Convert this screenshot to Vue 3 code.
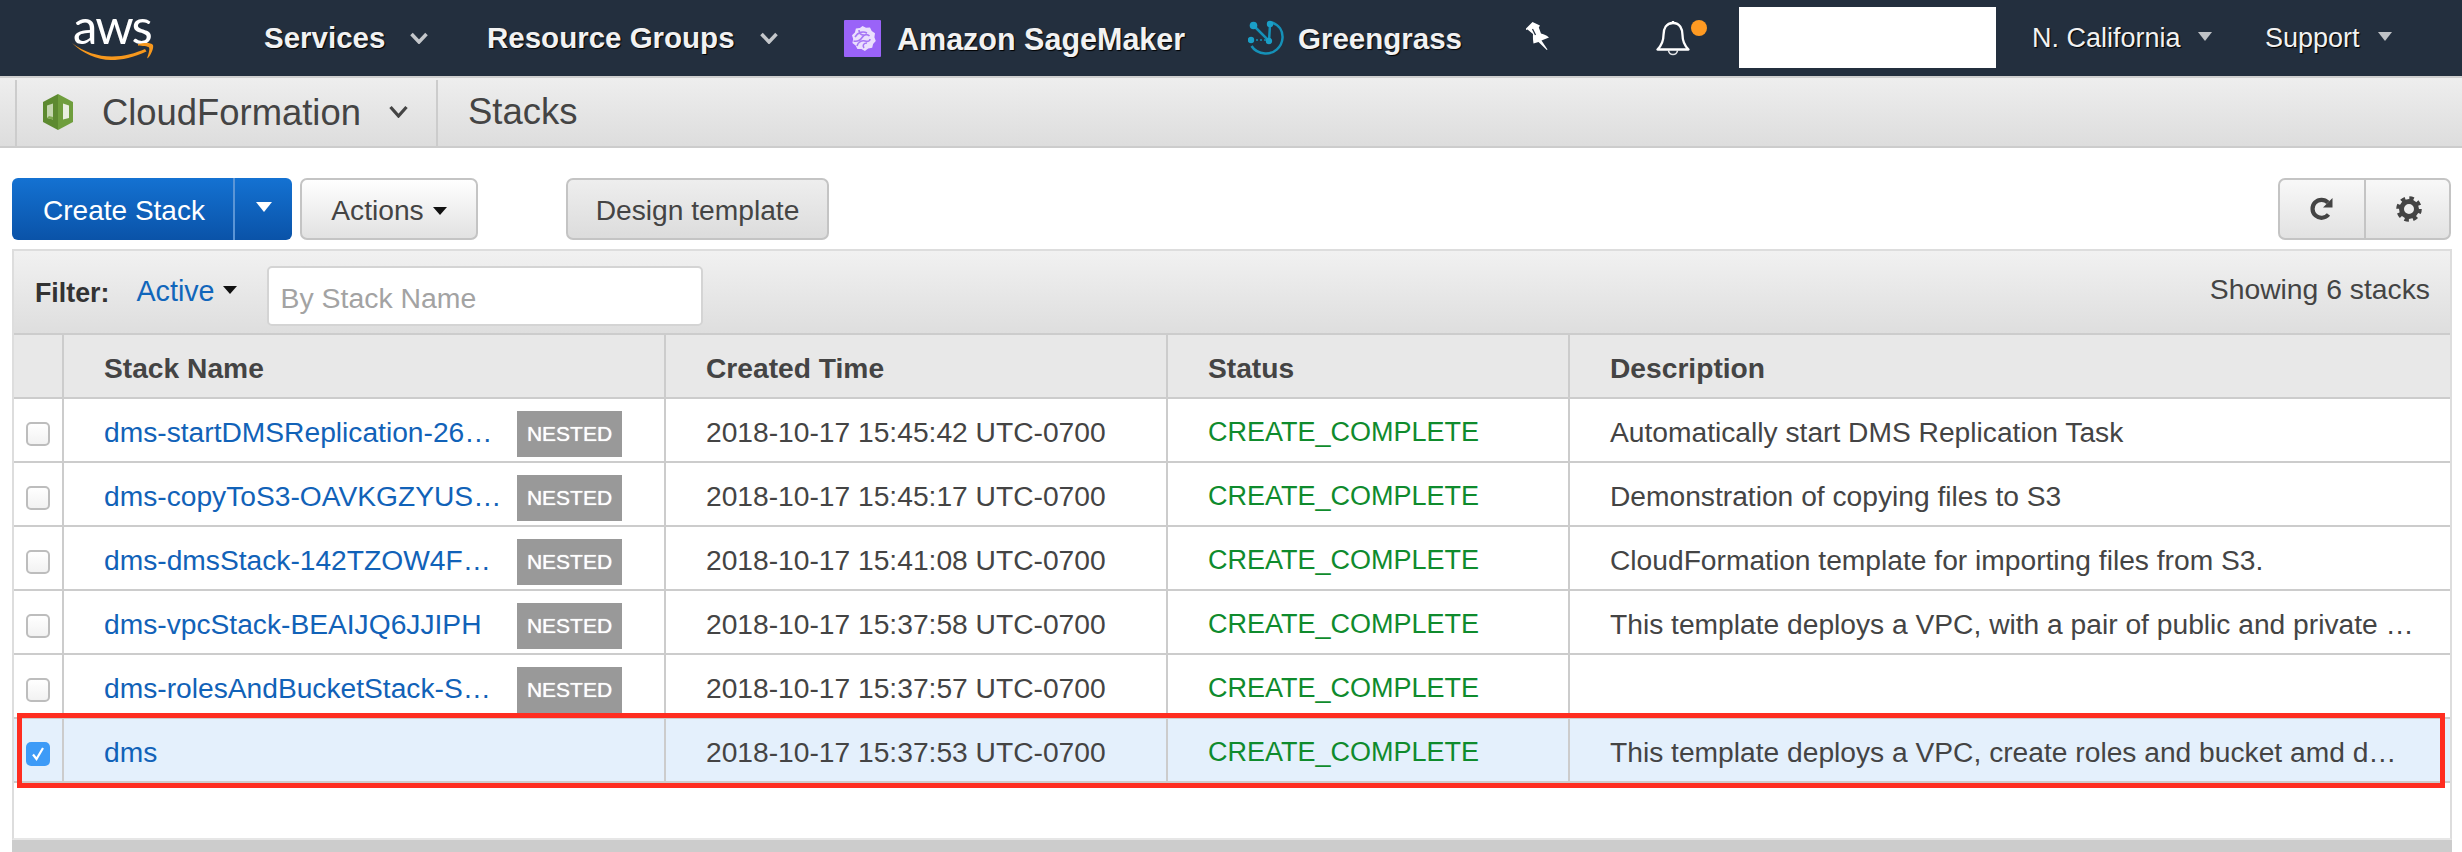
<script setup>
const rows = [
  { name: 'dms-startDMSReplication-26…', nested: true, time: '2018-10-17 15:45:42 UTC-0700', desc: 'Automatically start DMS Replication Task' },
  { name: 'dms-copyToS3-OAVKGZYUS…', nested: true, time: '2018-10-17 15:45:17 UTC-0700', desc: 'Demonstration of copying files to S3' },
  { name: 'dms-dmsStack-142TZOW4F…', nested: true, time: '2018-10-17 15:41:08 UTC-0700', desc: 'CloudFormation template for importing files from S3.' },
  { name: 'dms-vpcStack-BEAIJQ6JJIPH', nested: true, time: '2018-10-17 15:37:58 UTC-0700', desc: 'This template deploys a VPC, with a pair of public and private …' },
  { name: 'dms-rolesAndBucketStack-S…', nested: true, time: '2018-10-17 15:37:57 UTC-0700', desc: '' },
  { name: 'dms', nested: false, selected: true, time: '2018-10-17 15:37:53 UTC-0700', desc: 'This template deploys a VPC, create roles and bucket amd d…' }
]
</script>

<template>
  <div class="page">
    <header class="topbar">
      <div class="aws">
        <span class="aws-word">aws</span>
        <svg class="smile" viewBox="0 0 82 18" width="82" height="18">
          <path fill="#f7981d" d="M0 1C12 10 26 14.500 40 14.500C52 14.500 64 11 73 7L74.500 9.500C62 15.500 50 18 39 18C25 18 10 11 0 1Z" />
          <path fill="#f7981d" d="M66 2C71 .8 79 0 81 3C82 6 79 13 76 16C75.500 16.500 75 16 75.300 15.500C76.500 12 78 7 77 5.500C76 4 70 4 66 3.500Z" />
        </svg>
      </div>
      <span class="nav-b services">Services</span>
      <svg class="chev c1" viewBox="0 0 18 12" width="18" height="12"><path d="M1.500 2L9 10L16.500 2" fill="none" stroke="#c4c7cb" stroke-width="3.500" /></svg>
      <span class="nav-b groups">Resource Groups</span>
      <svg class="chev c2" viewBox="0 0 18 12" width="18" height="12"><path d="M1.500 2L9 10L16.500 2" fill="none" stroke="#c4c7cb" stroke-width="3.500" /></svg>
      <svg class="sm-icon" viewBox="0 0 37 37" width="37" height="37">
        <rect width="37" height="37" rx="1" fill="#9a63f8" />
        <path fill="#eadffd" d="M18.500 6l3.500 1.800 4-.3 1.700 3.500 3.300 2.300-.6 4 1.400 3.700-2.700 2.900-.9 3.900-4 .7-3.300 2.400-3.500-1.900-4 .1-1.800-3.500-3.200-2.500.8-4-1.200-3.800 2.900-2.800 1-3.900 4-.5z" />
        <path fill="none" stroke="#a677f5" stroke-width="1.600" d="M11 17c3-5 8-6 12-4M9.500 21c4 1 7-1 9-4s5-3 7-1M13 26c1-4 5-6 8-5s5 0 5-2M20 28c-2-3 0-5 3-5M15 10c0 3 2 5 5 5" />
      </svg>
      <span class="nav-b sage">Amazon SageMaker</span>
      <svg class="gg-icon" viewBox="0 0 36 36" width="36" height="36" fill="none" stroke="#1591b8">
        <path stroke-width="2.500" d="M24 2.500C31 5 35 11 34.500 18C34 27 26 34 17 33.500C11 33 6 30 3.500 26" />
        <path stroke-width="2.500" d="M6 6L21 21L22 5" />
        <path stroke-width="1.500" stroke-dasharray="2 2" d="M4 20H21" />
        <circle cx="5.500" cy="5.500" r="3.800" fill="#1a9fc7" stroke="none" />
        <circle cx="22" cy="4" r="3.200" fill="#1a9fc7" stroke="none" />
        <circle cx="3" cy="20" r="3.200" fill="#1a9fc7" stroke="none" />
        <circle cx="21" cy="21" r="3.200" fill="#1a9fc7" stroke="none" />
      </svg>
      <span class="nav-b green">Greengrass</span>
      <svg class="pin" viewBox="0 0 24 28" width="24" height="28">
        <path fill="#fff" d="M6.500 0L14 3.500L12.800 5.500L15 11.500C17 11.800 20 13 23 15.500L15.500 18.500L21.500 27.500L20.800 28L12.500 20L7.500 21.500C7 18.500 6.800 15.500 7 12L1.500 7.500L0 8L0 6.500Z" />
        <path stroke="#232f3e" stroke-width="1.200" d="M6.500 7L9.500 13" />
      </svg>
      <svg class="bell" viewBox="0 0 34 36" width="34" height="36" fill="none" stroke="#fff" stroke-width="2.300">
        <path d="M17 3C10 3 7.500 9 7.500 15C7.500 21 6 25 1.500 29.500H32.500C28 25 26.500 21 26.500 15C26.500 9 24 3 17 3Z" stroke-linejoin="round" />
        <path d="M17 1V3" />
        <path d="M12.500 30C12.500 36 21.500 36 21.500 30" stroke-width="1.600" stroke="#dfe1e4" />
      </svg>
      <span class="dot"></span>
      <span class="whitebox"></span>
      <span class="nav-r region">N. California</span>
      <span class="tri t1"></span>
      <span class="nav-r support">Support</span>
      <span class="tri t2"></span>
    </header>

    <nav class="subnav">
      <div class="sub-svc">
        <svg class="cf-icon" viewBox="0 0 30 36" width="30" height="36">
          <path fill="#6f9e3d" d="M15 0L30 8V28L15 36Z" />
          <path fill="#5d8a30" d="M15 0L0 8V28L15 36Z" />
          <path fill="#c4d6ae" d="M4 11.500L10 9.500V25.500L4 24Z" />
          <path fill="#e9efe0" d="M20 9.500L26 11.500V24L20 25.500Z" />
          <path fill="#7ea84f" d="M4 24L10 25.500V23L6 22Z" />
        </svg>
        <span class="svc-name">CloudFormation</span>
        <svg class="svc-chev" viewBox="0 0 19 13" width="19" height="13"><path d="M1.500 2L9.500 11L17.500 2" fill="none" stroke="#444" stroke-width="3.200" /></svg>
      </div>
      <span class="crumb">Stacks</span>
    </nav>

    <div class="toolbar">
      <div class="primary">
        <button class="primary-main">Create Stack</button>
        <button class="primary-drop"><span class="tri-w"></span></button>
      </div>
      <button class="btn actions">Actions<span class="tri-k"></span></button>
      <button class="btn design">Design template</button>
      <div class="icon-group">
        <button class="icon-btn">
          <svg viewBox="0 0 26 26" width="26" height="26" fill="none">
            <path d="M19.500 18.500A9 9 0 1 1 19 6.500" stroke="#444" stroke-width="4.200" />
            <path d="M23.500 2V11.500H14Z" fill="#444" />
          </svg>
        </button>
        <button class="icon-btn">
          <svg viewBox="0 0 26 26" width="26" height="26">
            <circle cx="13" cy="13" r="7.500" fill="none" stroke="#444" stroke-width="5" />
            <circle cx="13" cy="13" r="10.800" fill="none" stroke="#444" stroke-width="4" stroke-dasharray="4.400 4.082" />
          </svg>
        </button>
      </div>
    </div>

    <section class="panel">
      <div class="filter">
        <span class="f-label">Filter:</span>
        <span class="f-active">Active</span>
        <span class="tri-k f-tri"></span>
        <input class="f-input" placeholder="By Stack Name" />
        <span class="f-count">Showing 6 stacks</span>
      </div>
      <table class="grid">
        <colgroup>
          <col class="w-a" /><col class="w-b" /><col class="w-c" /><col class="w-d" /><col />
        </colgroup>
        <thead>
          <tr>
            <th></th><th>Stack Name</th><th>Created Time</th><th>Status</th><th class="last">Description</th>
          </tr>
        </thead>
        <tbody>
          <tr v-for="r in rows" :key="r.time" :class="{ selected: r.selected }">
            <td class="check-cell">
              <span class="check" :class="{ on: r.selected }">
                <svg v-if="r.selected" viewBox="0 0 24 24" width="24" height="24"><path d="M7 12.500L10.500 17L17 6" fill="none" stroke="#fff" stroke-width="2.200" /></svg>
              </span>
            </td>
            <td>
              <div class="name-cell">
                <a class="link">{{ r.name }}</a>
                <span v-if="r.nested" class="badge">NESTED</span>
              </div>
            </td>
            <td>{{ r.time }}</td>
            <td class="ok">CREATE_COMPLETE</td>
            <td class="last">{{ r.desc }}</td>
          </tr>
        </tbody>
      </table>
    </section>
    <div class="footer-bar"></div>
    <div class="callout"></div>
  </div>
</template>

<style>
html, body { margin: 0; background: #fff; }
</style>

<style scoped>
.page {
  position: relative;
  display: flex;
  flex-direction: column;
  height: 852px;
  overflow: hidden;
  background: #fff;
  font-family: "Liberation Sans", Arial, sans-serif;
  color: #444;
}
.topbar {
  position: relative;
  display: flex;
  align-items: center;
  height: 76px;
  border-bottom: 2px solid #cfcfcf;
  background: #232f3e;
  flex: none;
}
.aws {
  width: 82px;
  margin-left: 72px;
  height: 76px;
  position: relative;
}
.aws-word {
  position: absolute;
  left: 1px;
  top: 0;
  color: #fff;
  font: 400 49px/50px Lato, sans-serif;
  letter-spacing: -2px;
}
.smile { position: absolute; left: 0; top: 42px; }
.nav-b {
  color: #f2f2f2;
  font-size: 29.500px;
  font-weight: 700;
  text-shadow: 1px 1px 1px #000;
  white-space: nowrap;
}
.services { margin-left: 110px; width: 122px; }
.chev { flex: none; }
.c1 { margin-left: 24px; }
.groups { margin-left: 59px; width: 249px; }
.c2 { margin-left: 24px; }
.sm-icon { flex: none; margin-left: 66px; }
.sage { margin-left: 16px; width: 288px; font-size: 30.500px; margin-top: 2px; }
.gg-icon { flex: none; margin-left: 63px; }
.green { margin-left: 14px; width: 165px; margin-top: 2px; }
.pin { flex: none; margin-left: 63px; margin-top: -4px; }
.bell { flex: none; margin-left: 106px; margin-top: -1px; }
.dot {
  flex: none;
  width: 16px;
  height: 16px;
  margin-left: 1px;
  margin-top: -20px;
  border-radius: 50%;
  background: #ff9a22;
}
.whitebox { flex: none; width: 257px; height: 61px; margin-left: 32px; margin-top: -1px; background: #fff; }
.nav-r {
  color: #f2f2f2;
  font-size: 27px;
  text-shadow: 1px 1px 1px #000;
  white-space: nowrap;
}
.region { margin-left: 36px; width: 148px; }
.support { margin-left: 53px; width: 96px; }
.tri { flex: none; border: 7px solid transparent; border-top: 9px solid #bfc2c6; border-bottom: 0; margin-top: -4px; }
.t1 { margin-left: 18px; }
.t2 { margin-left: 17px; }

.subnav {
  display: flex;
  align-items: stretch;
  flex: none;
  height: 68px;
  border-bottom: 2px solid #ccc;
  background: linear-gradient(#eee, #ddd);
  box-sizing: content-box;
}
.sub-svc {
  display: flex;
  align-items: center;
  box-sizing: border-box;
  width: 423px;
  margin-left: 15px;
  border-left: 2px solid #ccc;
  border-right: 2px solid #ccc;
  margin-top: 2px;
  padding-left: 26px;
}
.cf-icon { flex: none; margin-top: -2px; }
.svc-name { margin-left: 29px; font-size: 36.400px; color: #444; }
.svc-chev { flex: none; margin-left: 28px; margin-top: -4px; }
.crumb { align-self: center; margin-left: 30px; font-size: 36.500px; color: #444; }

.toolbar {
  display: flex;
  align-items: flex-start;
  flex: none;
  height: 71px;
  padding: 30px 11px 0 12px;
}
button { font-family: inherit; margin: 0; cursor: pointer; }
.primary {
  display: flex;
  width: 280px;
  height: 62px;
  border-radius: 6px;
  overflow: hidden;
  background: linear-gradient(#1472d2, #0a53a8);
}
.primary-main {
  width: 223px;
  padding: 3px 0 0 3px;
  border: 0;
  border-right: 2px solid #5b95d6;
  color: #fff;
  background: transparent;
  font-size: 28px;
}
.primary-drop { flex: 1; border: 0; background: transparent; padding: 0; }
.tri-w { display: inline-block; border: 8px solid transparent; border-top: 10px solid #fff; border-bottom: 0; vertical-align: 2px; }
.btn {
  height: 62px;
  border: 2px solid #c4c4c4;
  border-radius: 7px;
  padding: 3px 0 0;
  color: #444;
  font-size: 28.200px;
  background: linear-gradient(#fff, #e2e2e2);
}
.actions { width: 178px; margin-left: 8px; }
.design {
  width: 263px;
  margin-left: 88px;
  background: linear-gradient(#eee, #dcdcdc);
}
.tri-k { display: inline-block; border: 7px solid transparent; border-top: 8px solid #111; border-bottom: 0; margin-left: 9px; vertical-align: 5px; }
.icon-group {
  display: flex;
  width: 173px;
  height: 62px;
  margin-left: auto;
  box-sizing: border-box;
  border: 2px solid #c4c4c4;
  border-radius: 7px;
  overflow: hidden;
  background: linear-gradient(#f8f8f8, #e2e2e2);
}
.icon-btn {
  flex: none;
  display: flex;
  align-items: center;
  justify-content: center;
  width: 85px;
  padding: 0;
  border: 0;
  background: transparent;
}
.icon-btn:first-child { border-right: 2px solid #c4c4c4; width: 86px; }

.panel {
  flex: none;
  box-sizing: border-box;
  height: 591px;
  margin: 0 10px 0 12px;
  border: 2px solid #ddd;
  border-bottom-color: #e6e6e6;
}
.filter {
  position: relative;
  display: flex;
  align-items: center;
  box-sizing: border-box;
  height: 84px;
  border-bottom: 2px solid #ccc;
  background: linear-gradient(#f1f1f1, #dedede);
  padding-left: 21px;
}
.f-label { font-size: 26.800px; font-weight: 700; color: #333; margin-top: 2px; }
.f-active { margin-left: 27px; font-size: 28.700px; color: #1166bb; margin-top: -1px; }
.f-tri { margin-left: 8px; vertical-align: 0; margin-top: -4px; }
.f-input {
  box-sizing: border-box;
  width: 436px;
  height: 60px;
  margin-left: 30px;
  margin-top: 8px;
  padding: 4px 12px 0;
  border: 2px solid #d4d4d4;
  border-radius: 5px;
  background: #fff;
  font: 28.400px "Liberation Sans", Arial, sans-serif;
  outline: none;
}
.f-input::placeholder { color: #a3a3a3; opacity: 1; }
.f-count { margin-left: auto; margin-right: 20px; margin-top: -6px; font-size: 28.300px; color: #444; }

.grid { width: 100%; table-layout: fixed; border-collapse: separate; border-spacing: 0; font-size: 28.200px; }
.w-a { width: 50px; }
.w-b { width: 602px; }
.w-c { width: 502px; }
.w-d { width: 402px; }
th, td {
  box-sizing: border-box;
  height: 64px;
  padding: 5px 0 0 40px;
  border-right: 2px solid #ccc;
  border-bottom: 2px solid #ccc;
  text-align: left;
  white-space: nowrap;
  overflow: hidden;
}
th { background: #e8e8e8; font-weight: 700; color: #444; }
th.last, td.last { border-right: 0; }
.check-cell { padding: 8px 0 0 12px; }
.check {
  display: block;
  box-sizing: border-box;
  width: 24px;
  height: 24px;
  border: 2px solid #bdbdbd;
  border-radius: 5px;
  background: linear-gradient(#fff, #f2f2f2);
}
.check.on { border: 0; background: #3d9bf7; }
.check svg { display: block; }
.name-cell { display: flex; align-items: center; }
.link { color: #1162b8; width: 413px; flex: none; }
.badge {
  box-sizing: border-box;
  width: 105px;
  height: 46px;
  margin-top: 3px;
  line-height: 46px;
  text-align: center;
  background: #999;
  color: #fff;
  font-size: 21px;
  text-shadow: 0 0 1px #fff;
}
.ok { color: #0f8b2d; font-size: 27px; }
.selected td { background: #e4f0fc; }
.footer-bar { flex: none; height: 12px; margin: 0 10px 0 12px; background: #ccc; }
.callout {
  position: absolute;
  left: 17px;
  top: 713px;
  box-sizing: border-box;
  width: 2428px;
  height: 75px;
  border: 5px solid #ff2d20;
  pointer-events: none;
}
</style>
